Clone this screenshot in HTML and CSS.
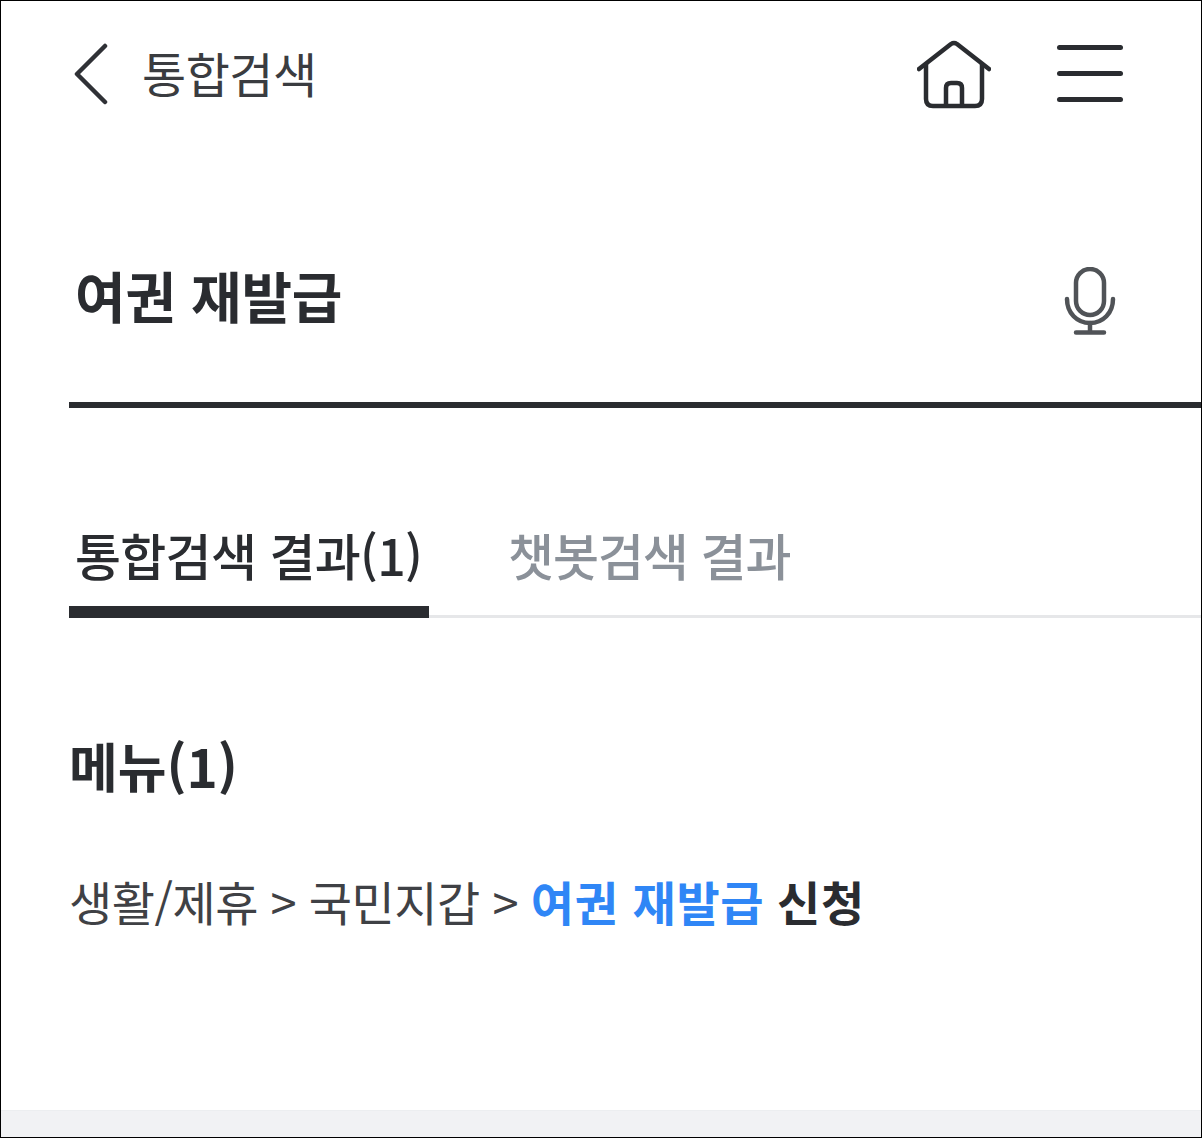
FILE: index.html
```html
<!DOCTYPE html>
<html lang="ko">
<head>
    <meta charset="UTF-8">
    <meta name="viewport" content="width=device-width, initial-scale=1.0">
    <title>통합검색</title>
    <link rel="stylesheet" href="styles.css">
</head>
<body>
    <div class="frame">
        <header class="top-bar">
            <svg class="icon-back" width="36" height="62" viewBox="0 0 36 62" fill="none">
                <path d="M32 3 L4 31 L32 59" stroke="#2f3136" stroke-width="4.5" stroke-linecap="round" stroke-linejoin="round"/>
            </svg>
            <h1 class="page-title">통합검색</h1>
            <svg class="icon-home" width="74" height="70" viewBox="0 0 74 70" fill="none">
                <path d="M2 29 L34 4 Q37 2 40 4 L72 29" stroke="#2a2c30" stroke-width="4.5" stroke-linecap="round" stroke-linejoin="round"/>
                <path d="M9 24 V59 Q9 66 16 66 H58 Q65 66 65 59 V24" stroke="#2a2c30" stroke-width="4.5" stroke-linejoin="round"/>
                <path d="M29 66 V48 Q29 43 34 43 H40 Q45 43 45 48 V66" stroke="#2a2c30" stroke-width="4.5" stroke-linejoin="round"/>
            </svg>
            <div class="icon-menu">
                <span></span>
                <span></span>
                <span></span>
            </div>
        </header>

        <div class="search-box">
            <span class="search-text">여권 재발급</span>
            <svg class="icon-mic" width="52" height="68" viewBox="0 0 52 68" fill="none">
                <rect x="12" y="2" width="28" height="46" rx="14" stroke="#505357" stroke-width="4.5"/>
                <path d="M3 32 C3 46 13 56 26 56 C39 56 49 46 49 32" stroke="#505357" stroke-width="4.5" stroke-linecap="round"/>
                <path d="M26 56 V65 M12 65.500 H40" stroke="#505357" stroke-width="4.5" stroke-linecap="round"/>
            </svg>
        </div>

        <nav class="tabs">
            <a class="tab active">통합검색 결과(1)</a>
            <a class="tab">챗봇검색 결과</a>
        </nav>

        <section class="results">
            <h2 class="results-title">메뉴(1)</h2>
            <p class="menu-path">생활/제휴 &gt; 국민지갑 &gt; <strong class="hit">여권 재발급</strong> <strong>신청</strong></p>
        </section>

        <div class="bottom-band"></div>
    </div>
</body>
</html>
```

FILE: styles.css
```css
* {
    box-sizing: border-box;
}
html, body {
    margin: 0;
    padding: 0;
}
body {
    font-family: "Noto Sans CJK KR", "Noto Sans", sans-serif;
    background-color: #fff;
    color: #2a2c30;
}
.frame {
    width: 1202px;
    height: 1138px;
    border: 1px solid #000;
    display: flex;
    flex-direction: column;
    overflow: hidden;
}
.top-bar {
    display: flex;
    align-items: center;
    height: 141px;
    padding: 0 78px 0 72px;
}
.icon-back {
    flex: none;
    margin-top: 4px;
}
.page-title {
    margin: 0 0 0 33px;
    font-size: 48px;
    font-weight: 400;
    letter-spacing: -0.5px;
    line-height: 1;
    color: #3a3c40;
    flex: 1;
}
.icon-home {
    flex: none;
    margin-top: 6px;
    margin-right: 66px;
}
.icon-menu {
    width: 66px;
    margin-top: 4px;
    display: flex;
    flex-direction: column;
    gap: 21px;
}
.icon-menu span {
    display: block;
    height: 5px;
    border-radius: 3px;
    background-color: #2a2c30;
}
.search-box {
    margin-left: 68px;
    height: 266px;
    border-bottom: 6px solid #2a2c30;
    display: flex;
    align-items: center;
    justify-content: space-between;
    padding: 58px 85px 0 6px;
}
.search-text {
    font-size: 55px;
    font-weight: 700;
    letter-spacing: -0.2px;
    line-height: 1;
    margin-bottom: 14px;
}
.tabs {
    margin: 103px 0 0 68px;
    height: 107px;
    display: flex;
    border-bottom: 3px solid #e6e7e9;
}
.tab {
    font-size: 50px;
    font-weight: 500;
    letter-spacing: -1.1px;
    line-height: 86px;
    color: #8b9199;
    padding: 0 7px 0 6px;
    margin-right: 73px;
    height: 107px;
}
.tab.active {
    letter-spacing: -0.7px;
    color: #2a2c30;
    border-bottom: 12px solid #2a2c30;
}
.results {
    padding-left: 68px;
    flex: 1;
}
.results-title {
    margin: 112px 0 0;
    font-size: 53px;
    font-weight: 700;
    line-height: 70px;
}
.menu-path {
    margin: 68px 0 0;
    font-size: 47px;
    letter-spacing: -0.5px;
    line-height: 66px;
    font-weight: 400;
    color: #3f4145;
}
.menu-path strong {
    font-weight: 700;
    letter-spacing: 0.7px;
    color: #2a2c30;
}
.menu-path .hit {
    color: #2f86f6;
}
.bottom-band {
    height: 27px;
    background-color: #f1f2f4;
    border-top: 1px solid #eceef0;
}
```
